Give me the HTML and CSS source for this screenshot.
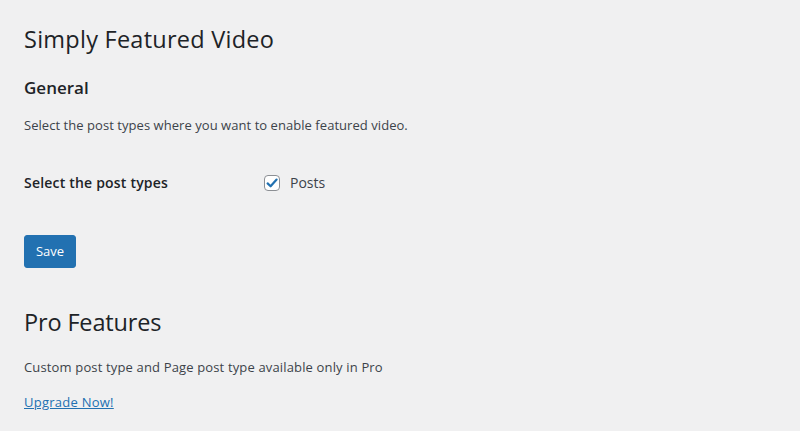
FILE: index.html
```html
<!DOCTYPE html>
<html>
<head>
<meta charset="utf-8">
<link rel="stylesheet" href="styles.css">
</head>
<body>
<div class="wrap">
  <h1 class="page-title">Simply Featured Video</h1>
  <h2 class="section-title">General</h2>
  <p class="desc">Select the post types where you want to enable featured video.</p>
  <div class="form-row">
    <div class="label">Select the post types</div>
    <label class="field">
      <span class="checkbox">
        <svg viewBox="0 0 16 16" width="16" height="16"><path d="M3.6 8.4 L6.6 11.3 L12.6 4.6" fill="none" stroke="#2271b1" stroke-width="2.2" stroke-linecap="round" stroke-linejoin="round"/></svg>
      </span>
      <span class="field-text">Posts</span>
    </label>
  </div>
  <div class="submit">
    <button class="btn-primary">Save</button>
  </div>
  <h1 class="page-title pro">Pro Features</h1>
  <p class="desc pro-desc">Custom post type and Page post type available only in Pro</p>
  <p class="link-row"><a href="#" class="upgrade">Upgrade Now!</a></p>
</div>
</body>
</html>
```
FILE: styles.css
```css
html, body {
  margin: 0;
  padding: 0;
  background: #f0f0f1;
}
body {
  font-family: "Open Sans", "Noto Sans", sans-serif;
  color: #3c434a;
  font-size: 13px;
}
.wrap {
  padding: 15px 24px 0 24px;
}
.page-title {
  font-size: 23.5px;
  font-weight: 400;
  line-height: 30px;
  color: #1d2327;
  margin: 0;
  padding: 9px 0 4px 0;
  letter-spacing: 0.25px;
}
.section-title {
  font-size: 17px;
  font-weight: 600;
  line-height: 22px;
  color: #1d2327;
  margin: 19px 0 0 0;
}
.desc {
  margin: 17px 0 0 0;
  font-size: 13px;
  line-height: 19px;
  letter-spacing: 0.05px;
}
.form-row {
  display: flex;
  align-items: center;
  margin-top: 39px;
}
.label {
  width: 240px;
  font-size: 14px;
  font-weight: 600;
  color: #1d2327;
  line-height: 18px;
  letter-spacing: 0.2px;
}
.field {
  display: flex;
  align-items: center;
}
.checkbox {
  width: 14px;
  height: 14px;
  border: 1px solid #8c8f94;
  border-radius: 4px;
  background: #fff;
  position: relative;
}
.checkbox svg {
  position: absolute;
  left: -1px;
  top: -1px;
}
.field-text {
  margin-left: 10px;
  font-size: 14px;
  line-height: 18px;
  color: #3c434a;
}
.submit {
  margin-top: 43px;
}
.btn-primary {
  display: block;
  height: 33px;
  width: 52px;
  padding: 0;
  background: #2271b1;
  border: 1px solid #2271b1;
  border-radius: 3px;
  color: #fff;
  font-family: "Open Sans", "Noto Sans", sans-serif;
  font-size: 13px;
  line-height: 31px;
  text-align: center;
}
.pro {
  margin-top: 39px;
  padding-top: 0;
  letter-spacing: -0.15px;
}
.pro-desc {
  margin-top: 17px;
  letter-spacing: 0.15px;
}
.link-row {
  margin: 16px 0 0 0;
  font-size: 13px;
  line-height: 19px;
  letter-spacing: 0.25px;
}
.upgrade {
  color: #2271b1;
  text-decoration: underline;
}
```
